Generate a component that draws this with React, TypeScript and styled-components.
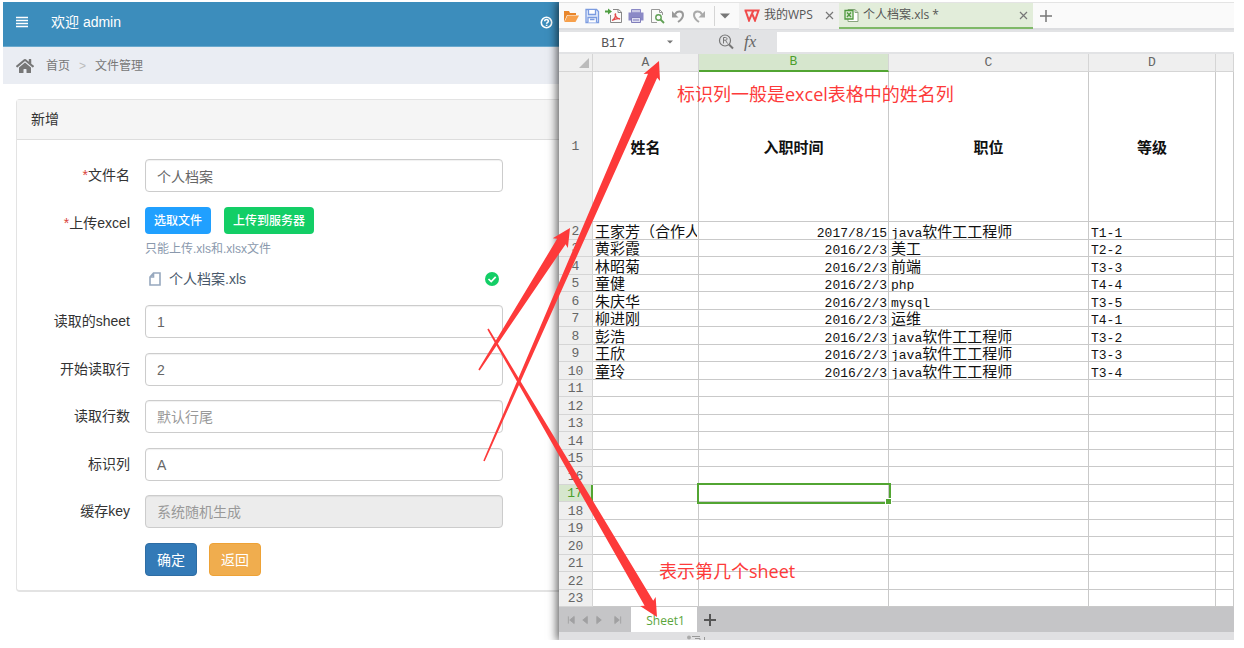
import React from "react";
import styled, { createGlobalStyle, css } from "styled-components";
import { FaHome } from "react-icons/fa";

const GlobalStyle = createGlobalStyle`
  * { box-sizing: border-box; }
  body {
    margin: 0;
    background: #fff;
    color: #333;
    font: 14px/20px "Liberation Sans", "Noto Sans CJK SC", sans-serif;
  }
  button, input { font: inherit; color: inherit; }
  button { cursor: pointer; }
`;

const uiFont = `"Open Sans", "Noto Sans CJK SC", sans-serif`;
const monoFont = `"Liberation Mono", "Noto Sans CJK SC", monospace`;
const red = "#fd3a3a";

const Page = styled.div`
  padding: 2px 10px 8px 3px;
`;

const Split = styled.div`
  position: relative;
  display: grid;
  grid-template-columns: 556fr 675fr;
  overflow: hidden;
`;

/* ---------- admin form ---------- */

const Admin = styled.main`
  min-width: 0;
  overflow: hidden;
`;

const TopBar = styled.header`
  display: flex;
  align-items: center;
  height: 45px;
  padding: 0 6px 4px 13px;
  background: #3c8dbc;
  border-bottom: 1px solid #6aa9cd;
  color: #fff;
`;

const IconButton = styled.button`
  display: flex;
  align-items: center;
  justify-content: center;
  padding: 0;
  border: 0;
  background: none;
  color: inherit;
`;

const Welcome = styled.span`
  flex: 1;
  margin-left: 23px;
`;

const Crumbs = styled.nav`
  display: flex;
  align-items: center;
  height: 37px;
  padding-left: 13px;
  background: #eaedf3;
  color: #777;
  font-size: 12px;
  a { color: inherit; text-decoration: none; }
  a:nth-of-type(1) { margin-left: 12px; }
  span { margin: 0 9px; color: #bbb; }
`;

const Panel = styled.section`
  margin: 15px 0 48px 13px;
  border: 1px solid #e3e3e3;
  border-right: 0;
  border-bottom-width: 2px;
  border-radius: 4px 0 0 4px;
`;

const PanelTitle = styled.h1`
  height: 40px;
  margin: 0;
  padding: 9px 14px;
  background: #f5f5f5;
  border-bottom: 1px solid #ddd;
  font-size: 14px;
  line-height: 20px;
  font-weight: 400;
`;

const Form = styled.form`
  padding: 19px 56px 0 0;
`;

const Row = styled.div<{ $tall?: boolean }>`
  display: grid;
  grid-template-columns: 113px 1fr;
  column-gap: 15px;
  min-height: ${(p) => (p.$tall ? 84 : 33)}px;
  margin-bottom: 15px;
  &:nth-child(even) { margin-bottom: 14px; }
`;

const Label = styled.label`
  padding-top: 6px;
  text-align: right;
`;

const Star = styled.span`
  color: #d9433b;
`;

const Field = styled.input`
  width: 100%;
  height: 33px;
  padding: 0 11px;
  border: 1px solid #ccc;
  border-radius: 4px;
  background: #fff;
  box-shadow: inset 0 1px 1px rgba(0, 0, 0, 0.06);
  color: #666;
  &::placeholder { color: #999; opacity: 1; }
  &:disabled { background: #ececec; }
`;

const Buttons = styled.div<{ $gap: number }>`
  display: flex;
  gap: ${(p) => p.$gap}px;
`;

const SmallButton = styled.button<{ $bg: string }>`
  height: 27px;
  padding: 0 9px;
  border: 0;
  border-radius: 4px;
  background: ${(p) => p.$bg};
  color: #fff;
  font-size: 12px;
  font-weight: 500;
`;

const ActionButton = styled.button<{ $bg: string; $edge: string }>`
  width: 52px;
  height: 33px;
  padding: 0;
  border: 1px solid ${(p) => p.$edge};
  border-radius: 4px;
  background: ${(p) => p.$bg};
  color: #fff;
`;

const Tip = styled.p`
  margin: 5px 0 0;
  color: #8a99ad;
  font-size: 12px;
`;

const FileLine = styled.div`
  display: flex;
  align-items: center;
  margin-top: 10px;
  padding: 0 4px;
  color: #48576a;
  span { flex: 1; margin-left: 8px; }
`;

/* ---------- spreadsheet ---------- */

const Book = styled.section`
  position: relative;
  min-width: 0;
  background: #fff;
  box-shadow: -1px 0 9px 1px rgba(0, 0, 0, 0.65);
`;

const Toolbar = styled.div`
  display: flex;
  align-items: center;
  height: 28px;
  border-top: 1px solid #e4e4e4;
  border-bottom: 2px solid #dcdde0;
  background: #fafafa;
`;

const Tools = styled.div`
  display: flex;
  align-items: center;
  gap: 5px;
  width: 180px;
  padding-left: 4px;
`;

const ToolSeparator = styled.span`
  width: 1px;
  height: 20px;
  margin-left: 2px;
  background: #d5d5d5;
`;

const Tab = styled.div<{ $active?: boolean }>`
  display: flex;
  align-items: center;
  width: ${(p) => (p.$active ? 194 : 100)}px;
  height: 26px;
  padding: 1px 5px 0;
  gap: 4px;
  border-bottom: 2px solid ${(p) => (p.$active ? "#7fb968" : "#f0f0f0")};
  background: ${(p) => (p.$active ? "#e2edda" : "#f0f0f0")};
  color: #555;
  font: 12px/20px ${uiFont};
  span { flex: 1; white-space: nowrap; }
`;

const NewTab = styled(IconButton)`
  margin-left: 7px;
`;

const FormulaBar = styled.div`
  display: flex;
  align-items: center;
  height: 24px;
  background: #e2e3e5;
`;

const NameBox = styled.div`
  display: flex;
  align-items: center;
  width: 121px;
  height: 20px;
  background: #fff;
  input {
    width: 108px;
    height: 20px;
    padding: 2px 0 0;
    border: 0;
    background: none;
    color: #555;
    font: 13px/16px ${monoFont};
    text-align: center;
  }
`;

const FormulaTools = styled.div`
  display: flex;
  align-items: center;
  gap: 10px;
  width: 97px;
  padding-left: 38px;
  color: #666;
  i { font: italic 17px/20px "Liberation Serif", serif; }
`;

const FormulaInput = styled.input`
  flex: 1;
  min-width: 0;
  height: 20px;
  border: 0;
  background: #fff;
`;

const Grid = styled.table`
  width: 100%;
  table-layout: fixed;
  border-collapse: separate;
  border-spacing: 0;
  color: #111;
  font: 15px/16px "Noto Sans CJK SC", sans-serif;
`;

const Line = styled.tr`
  height: 18px;
  &:nth-child(odd) { height: 17px; }
  &:first-child { height: 150px; }
`;

const cellBox = css`
  padding: 0;
  border-right: 1px solid #c9c9c9;
  border-bottom: 1px solid #c9c9c9;
  overflow: hidden;
  white-space: nowrap;
`;

const HeadCell = styled.th<{ $active?: boolean; $side?: boolean }>`
  ${cellBox}
  height: ${(p) => (p.$side ? "auto" : "18px")};
  background: ${(p) => (p.$active ? "#d6e6cd" : "#efefef")};
  color: ${(p) => (p.$active ? "#4b9e2c" : "#666")};
  border-color: #d5d5d5;
  font: 13px/16px ${monoFont};
  text-align: center;
  ${(p) => p.$active && !p.$side && css`border-bottom: 2px solid #52a532;`}
  ${(p) => p.$active && p.$side && css`border-right: 2px solid #52a532;`}
  svg { display: block; margin-left: 20px; }
`;

const HeadText = styled.div`
  height: 16px;
  padding-top: 1px;
`;

const TitleCell = styled.th`
  ${cellBox}
  font-weight: 700;
  text-align: center;
`;

const Cell = styled.td<{ $right?: boolean; $selected?: boolean }>`
  ${cellBox}
  padding: 0 1px 0 2px;
  text-align: ${(p) => (p.$right ? "right" : "left")};
  ${(p) =>
    p.$selected &&
    css`
      position: relative;
      overflow: visible;
      outline: 2px solid #52a532;
      &::after {
        content: "";
        position: absolute;
        right: -3px;
        bottom: -3px;
        width: 5px;
        height: 5px;
        background: #52a532;
        outline: 1px solid #fff;
      }
    `}
`;

const Clip = styled.div`
  height: 16px;
  overflow: hidden;
`;

const Latin = styled.span`
  font: 13px/16px ${monoFont};
`;

const SheetBar = styled.div`
  display: flex;
  align-items: center;
  height: 25px;
  background: #c5c5c7;
  color: #555;
`;

const SheetNav = styled.div`
  display: flex;
  gap: 5px;
  width: 72px;
  padding-left: 8px;
  color: #a0a0a2;
  button:last-child { margin-left: 4px; }
`;

const SheetTab = styled.button`
  width: 66px;
  height: 25px;
  padding: 2px 0 0 3px;
  border: 0;
  background: #fff;
  color: #5aa53c;
  font: 12px/20px ${uiFont};
`;

const StatusBar = styled.div`
  display: flex;
  align-items: flex-end;
  height: 8px;
  padding-left: 127px;
  background: #e0e0e2;
`;

/* ---------- annotations ---------- */

const Note = styled.p<{ $x: number; $y: number }>`
  position: absolute;
  left: ${(p) => p.$x}px;
  top: ${(p) => p.$y}px;
  margin: 0;
  color: ${red};
  font: 18px/24px ${uiFont};
  white-space: nowrap;
`;

const Arrows = styled.svg`
  position: absolute;
  inset: 0;
  width: 100%;
  height: 100%;
  pointer-events: none;
`;

function Arrow({ from, to, half }: { from: [number, number]; to: [number, number]; half: number }) {
  const dx = to[0] - from[0];
  const dy = to[1] - from[1];
  const len = Math.hypot(dx, dy);
  const [ux, uy] = [dx / len, dy / len];
  const at = (back: number, side: number) =>
    `${to[0] - ux * back - uy * side},${to[1] - uy * back + ux * side}`;
  const points = [
    at(len, 0.8), at(16, half), at(18, 9), at(0, 0), at(18, -9), at(16, -half), at(len, -0.8),
  ].join(" ");
  return <polygon points={points} fill={red} />;
}

const Close = () => (
  <svg width="9" height="9" viewBox="0 0 9 9" stroke="#777" strokeWidth="1.2">
    <path d="M1 1l7 7M8 1L1 8" />
  </svg>
);

const Plus = ({ size, weight, color }: { size: number; weight: number; color: string }) => (
  <svg width={size} height={size} viewBox="0 0 12 12" stroke={color} strokeWidth={weight}>
    <path d="M6 0v12M0 6h12" />
  </svg>
);

const Caret = ({ size }: { size: number }) => (
  <svg width={size} height={size} viewBox="0 0 10 10"><path d="M0 2.5h10l-5 5z" fill="#777" /></svg>
);

const OpenIcon = () => (
  <svg width="16" height="16" viewBox="0 0 16 16">
    <path d="M1 14V3h5l1 2h6v2H4z" fill="#e8862c" /><path d="M4.500 7.500H16L12.500 14H1.500z" fill="#f7a04b" />
  </svg>
);
const SaveIcon = () => (
  <svg width="16" height="16" viewBox="0 0 16 16" fill="none" stroke="#7b9be0" strokeWidth="1.300">
    <path d="M2 1.500h10.500l2 2v11H2z" fill="#e3ebfb" /><path d="M4.500 2v4.500h7V2" fill="#fff" /><path d="M4 14.500V9.500h8.500v5M6 11.500h4.500" fill="#fff" />
  </svg>
);
const PdfIcon = () => (
  <svg width="18" height="16" viewBox="0 0 18 16" fill="none">
    <path d="M5.500 7v7.500h11V4L13.500 1.500H8" stroke="#888" /><path d="M13 1.500V4.500h3.500" stroke="#888" />
    <path d="M0 3.500h3" stroke="#4f9e42" strokeWidth="2" /><path d="M3 .500l4 3-4 3z" fill="#4f9e42" />
    <path d="M7 12.500c3-1.500 4-5 3.500-6.500-1.200 0 .5 4.500 4.500 5-2-1-5 0-8 1.500z" stroke="#e34848" strokeWidth="1.300" />
  </svg>
);
const PrintIcon = () => (
  <svg width="16" height="16" viewBox="0 0 16 16">
    <path d="M3.500 1.500h9V5h-9z" fill="#c9c8e4" stroke="#8b89c6" /><path d="M.5 4.500h15v8h-15z" fill="#8b89c6" />
    <path d="M3.500 9.500h9v5h-9z" fill="#dddcf0" stroke="#7f7dbb" /><path d="M5 12h6" stroke="#7f7dbb" />
  </svg>
);
const PreviewIcon = () => (
  <svg width="16" height="16" viewBox="0 0 16 16" fill="none">
    <path d="M8 14.500H2.500v-13h8l3 3V7M10.500 1.500v3h3" stroke="#999" />
    <circle cx="9.500" cy="9.500" r="2.700" stroke="#5f9f54" strokeWidth="1.400" /><path d="M11.500 11.500L15 15" stroke="#5f9f54" strokeWidth="1.800" />
  </svg>
);
const UndoIcon = ({ flip }: { flip?: boolean }) => (
  <svg width="16" height="16" viewBox="0 0 16 16" fill="none">
    <g transform={flip ? "matrix(-1 0 0 1 16 0)" : undefined}>
      <path d="M5 6.500C7 2.500 13 2.500 13 7c0 3-2 5-5 7" stroke={flip ? "#aaa" : "#999"} strokeWidth="2" />
      <path d="M2 3v6.500h6.500z" fill={flip ? "#aaa" : "#999"} />
    </g>
  </svg>
);
const WpsIcon = () => (
  <svg width="16" height="13" viewBox="0 0 16 13" fill="none" stroke="#f04c4c" strokeWidth="2">
    <path d="M.5 1.500h14l-3.500 10-3-7-3 7-3.500-10M8 4.500l1.500-3" />
  </svg>
);
const XlsIcon = () => (
  <svg width="15" height="15" viewBox="0 0 15 15" fill="none">
    <path d="M4 1.500h7l3 3v9H4z" fill="#fff" stroke="#8aa580" /><path d="M11 1.500v3h3" stroke="#8aa580" />
    <path d="M1 2.500h8v8.500H1z" fill="#dcebd5" stroke="#4f9a3e" strokeWidth="1.300" /><path d="M3 4.500l4 4.500M7 4.500L3 9" stroke="#4f9a3e" strokeWidth="1.400" />
  </svg>
);

const people: [string, string, string, string][] = [
  ["王家芳（合作人）", "2017/8/15", "java软件工工程师", "T1-1"],
  ["黄彩霞", "2016/2/3", "美工", "T2-2"],
  ["林昭菊", "2016/2/3", "前端", "T3-3"],
  ["童健", "2016/2/3", "php", "T4-4"],
  ["朱庆华", "2016/2/3", "mysql", "T3-5"],
  ["柳进刚", "2016/2/3", "运维", "T4-1"],
  ["彭浩", "2016/2/3", "java软件工工程师", "T3-2"],
  ["王欣", "2016/2/3", "java软件工工程师", "T3-3"],
  ["童玲", "2016/2/3", "java软件工工程师", "T3-4"],
];

function CellText({ text }: { text: string }) {
  const parts = text.match(/[\x20-\x7e]+|[^\x20-\x7e]+/g) || [];
  return (
    <Clip>
      {parts.map((part, i) => (/^[\x20-\x7e]/.test(part) ? <Latin key={i}>{part}</Latin> : part))}
    </Clip>
  );
}

function TextRow(props: { id: string; label: string; value?: string; placeholder?: string; required?: boolean; disabled?: boolean }) {
  return (
    <Row>
      <Label htmlFor={props.id}>{props.required && <Star>*</Star>}{props.label}</Label>
      <Field id={props.id} defaultValue={props.value} placeholder={props.placeholder} disabled={props.disabled} />
    </Row>
  );
}

function AdminForm() {
  return (
    <Admin>
      <TopBar>
        <IconButton aria-label="菜单">
          <svg width="12" height="12" viewBox="0 0 12 12" stroke="#fff" strokeWidth="2"><path d="M0 1.500h12M0 4.500h12M0 7.500h12M0 10.500h12" strokeWidth="1.600" /></svg>
        </IconButton>
        <Welcome>欢迎 admin</Welcome>
        <IconButton aria-label="帮助">
          <svg width="13" height="13" viewBox="0 0 13 13" fill="none" stroke="#fff" strokeWidth="1.600">
            <circle cx="6.500" cy="6.500" r="5.200" /><path d="M4.700 5.200c0-2.400 3.700-2.200 3.700 0 0 1.200-1.800 1.200-1.800 2.600M6.600 8.700v1.300" />
          </svg>
        </IconButton>
      </TopBar>
      <Crumbs>
        <FaHome size={18} />
        <a href="#home">首页</a>
        <span>&gt;</span>
        <a href="#files">文件管理</a>
      </Crumbs>
      <Panel>
        <PanelTitle>新增</PanelTitle>
        <Form onSubmit={(e) => e.preventDefault()}>
          <TextRow id="name" label="文件名" value="个人档案" required />
          <Row $tall>
            <Label htmlFor="pick"><Star>*</Star>上传excel</Label>
            <div>
              <Buttons $gap={13}>
                <SmallButton id="pick" type="button" $bg="#20a0ff">选取文件</SmallButton>
                <SmallButton type="button" $bg="#13ce66">上传到服务器</SmallButton>
              </Buttons>
              <Tip>只能上传.xls和.xlsx文件</Tip>
              <FileLine>
                <svg width="12" height="14" viewBox="0 0 12 14" fill="none" stroke="#97a8be" strokeWidth="1.600">
                  <path d="M4.500 1h6.500v12H1V5zM4.500 1v4H1" />
                </svg>
                <span>个人档案.xls</span>
                <svg width="14" height="14" viewBox="0 0 14 14" fill="none">
                  <circle cx="7" cy="7" r="7" fill="#13ce66" /><path d="M3.500 7l2.700 2.600 4.500-4.700" stroke="#fff" strokeWidth="1.700" />
                </svg>
              </FileLine>
            </div>
          </Row>
          <TextRow id="sheet" label="读取的sheet" value="1" />
          <TextRow id="start" label="开始读取行" value="2" />
          <TextRow id="count" label="读取行数" placeholder="默认行尾" />
          <TextRow id="column" label="标识列" value="A" />
          <TextRow id="cache" label="缓存key" placeholder="系统随机生成" disabled />
          <Row>
            <span />
            <Buttons $gap={12}>
              <ActionButton type="submit" $bg="#337ab7" $edge="#2e6da4">确定</ActionButton>
              <ActionButton type="button" $bg="#f0ad4e" $edge="#eea236">返回</ActionButton>
            </Buttons>
          </Row>
        </Form>
      </Panel>
    </Admin>
  );
}

function Spreadsheet() {
  const rest = Array.from({ length: 13 }, (_, i) => i + 11);
  return (
    <Book>
      <Toolbar>
        <Tools>
          <IconButton aria-label="打开"><OpenIcon /></IconButton>
          <IconButton aria-label="保存"><SaveIcon /></IconButton>
          <IconButton aria-label="输出为PDF"><PdfIcon /></IconButton>
          <IconButton aria-label="打印"><PrintIcon /></IconButton>
          <IconButton aria-label="预览"><PreviewIcon /></IconButton>
          <IconButton aria-label="撤销"><UndoIcon /></IconButton>
          <IconButton aria-label="恢复"><UndoIcon flip /></IconButton>
          <ToolSeparator />
          <IconButton aria-label="更多"><Caret size={10} /></IconButton>
        </Tools>
        <Tab>
          <WpsIcon />
          <span>我的WPS</span>
          <IconButton aria-label="关闭"><Close /></IconButton>
        </Tab>
        <Tab $active>
          <XlsIcon />
          <span>个人档案.xls *</span>
          <IconButton aria-label="关闭"><Close /></IconButton>
        </Tab>
        <NewTab aria-label="新建"><Plus size={12} weight={1.5} color="#777" /></NewTab>
      </Toolbar>
      <FormulaBar>
        <NameBox>
          <input aria-label="名称框" defaultValue="B17" />
          <IconButton aria-label="选择单元格"><Caret size={6} /></IconButton>
        </NameBox>
        <FormulaTools>
          <svg width="16" height="16" viewBox="0 0 16 16" fill="none" stroke="#777" strokeWidth="1.200">
            <circle cx="7" cy="6.500" r="5.500" /><path d="M11 10.500l4 4" strokeWidth="2" />
            <path d="M5.500 9.500v-6h2c2 0 2 2.700 0 2.700h-2M7.500 6.200l2 3.300" strokeWidth="1" />
          </svg>
          <i>fx</i>
        </FormulaTools>
        <FormulaInput aria-label="公式" />
      </FormulaBar>
      <Grid>
        <colgroup>
          <col width="34" /><col width="106" /><col width="190" /><col width="200" /><col width="127" /><col />
        </colgroup>
        <thead>
          <tr>
            <HeadCell aria-label="全选"><svg width="10" height="10" viewBox="0 0 10 10"><path d="M10 0v10H0z" fill="#bbb" /></svg></HeadCell>
            <HeadCell>A</HeadCell>
            <HeadCell $active>B</HeadCell>
            <HeadCell>C</HeadCell>
            <HeadCell>D</HeadCell>
            <HeadCell />
          </tr>
        </thead>
        <tbody>
          <Line>
            <HeadCell $side>1</HeadCell>
            {["姓名", "入职时间", "职位", "等级", ""].map((t, i) => <TitleCell key={i}>{t}</TitleCell>)}
          </Line>
          {people.map((row, i) => (
            <Line key={i}>
              <HeadCell $side><HeadText>{i + 2}</HeadText></HeadCell>
              {row.map((t, j) => <Cell key={j} $right={j === 1}><CellText text={t} /></Cell>)}
              <Cell />
            </Line>
          ))}
          {rest.map((n) => (
            <Line key={n}>
              <HeadCell $side $active={n === 17}><HeadText>{n}</HeadText></HeadCell>
              <Cell /><Cell $selected={n === 17} /><Cell /><Cell /><Cell />
            </Line>
          ))}
        </tbody>
      </Grid>
      <SheetBar>
        <SheetNav>
          {["M1.500 1v8M8 1v8L3 5z", "M7 1v8L2 5z", "M2 1v8l5-4z", "M8.500 1v8M2 1v8l5-4z"].map((d, i) => (
            <IconButton key={i} aria-label={["首个", "上一个", "下一个", "末个"][i]}>
              <svg width="9" height="10" viewBox="0 0 10 10" fill="currentColor" stroke="currentColor"><path d={d} /></svg>
            </IconButton>
          ))}
        </SheetNav>
        <SheetTab>Sheet1</SheetTab>
        <NewTab aria-label="新建工作表"><Plus size={12} weight={2} color="#555" /></NewTab>
      </SheetBar>
      <StatusBar>
        <svg width="20" height="5" viewBox="0 0 20 5" fill="none" stroke="#999"><circle cx="3" cy="2.500" r="2" fill="#aaa" stroke="none" /><path d="M6 1.500h8M9 3.500h5V5M18.500 2v3" /></svg>
      </StatusBar>
      <Note $x={118} $y={80}>标识列一般是excel表格中的姓名列</Note>
      <Note $x={100} $y={557}>表示第几个sheet</Note>
    </Book>
  );
}

export default function App() {
  return (
    <>
      <GlobalStyle />
      <Page>
        <Split>
          <AdminForm />
          <Spreadsheet />
          <Arrows viewBox="3 2 1231 638" preserveAspectRatio="none" aria-hidden="true">
            <Arrow from={[488, 329]} to={[657, 617]} half={5} />
            <Arrow from={[479, 370]} to={[570, 228]} half={5} />
            <Arrow from={[484, 461]} to={[659, 61]} half={5} />
          </Arrows>
        </Split>
      </Page>
    </>
  );
}
